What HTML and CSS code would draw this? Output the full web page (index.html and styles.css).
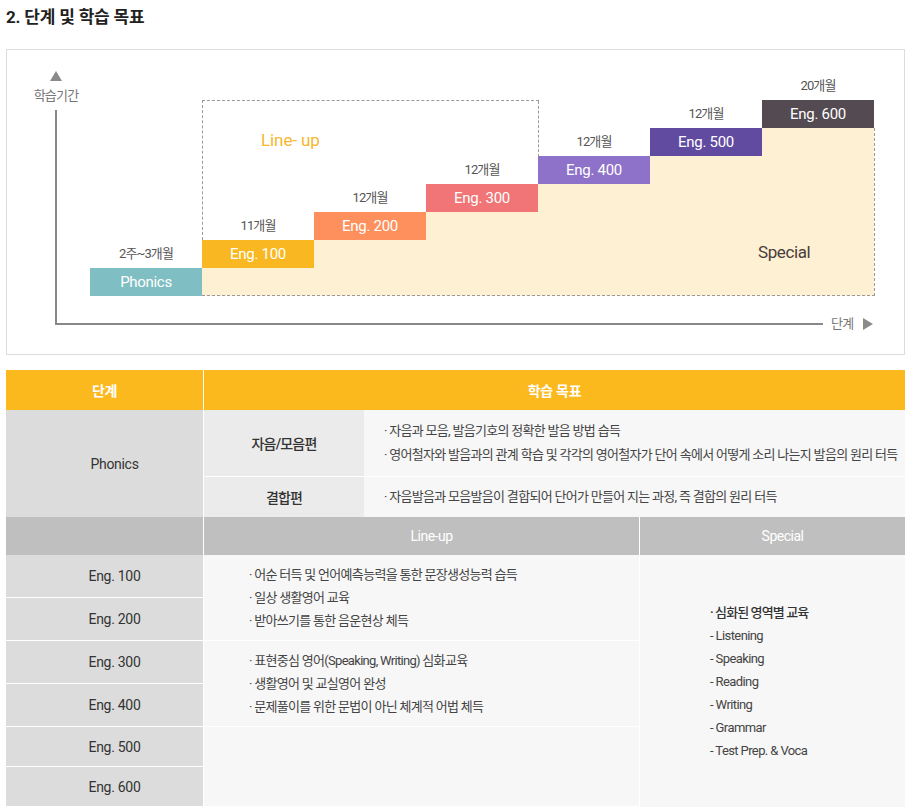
FILE: index.html
```html
<!DOCTYPE html>
<html lang="ko">
<head>
<meta charset="utf-8">
<title>단계 및 학습 목표</title>
<link rel="stylesheet" href="styles.css">
</head>
<body>
<div class="page">
  <h2 class="title">2. 단계 및 학습 목표</h2>

  <div class="chart">
    <div class="y-arrow"></div>
    <div class="y-label">학습기간</div>
    <div class="y-axis"></div>
    <div class="x-axis"></div>
    <div class="x-label">단계</div>
    <div class="x-arrow"></div>

    <div class="steps">
      <div class="step"><div class="dur">2주~3개월</div><div class="bar c-ph">Phonics</div></div>
      <div class="step"><div class="dur">11개월</div><div class="bar c-100">Eng. 100</div><div class="fill f1"></div></div>
      <div class="step"><div class="dur">12개월</div><div class="bar c-200">Eng. 200</div><div class="fill f2"></div></div>
      <div class="step"><div class="dur">12개월</div><div class="bar c-300">Eng. 300</div><div class="fill f3"></div></div>
      <div class="step"><div class="dur">12개월</div><div class="bar c-400">Eng. 400</div><div class="fill f4"></div></div>
      <div class="step"><div class="dur">12개월</div><div class="bar c-500">Eng. 500</div><div class="fill f5"></div></div>
      <div class="step"><div class="dur">20개월</div><div class="bar c-600">Eng. 600</div><div class="fill f6"></div></div>
    </div>

    <div class="lineup-box"></div>
    <div class="special-box"></div>
    <div class="lineup-title">Line- up</div>
    <div class="special-title">Special</div>
  </div>

  <div class="table">
    <div class="cell head h-step">단계</div>
    <div class="cell head h-goal">학습 목표</div>

    <div class="cell stage phon">Phonics</div>
    <div class="cell sub sub1">자음/모음편</div>
    <div class="cell content cont1">
      <p>· 자음과 모음, 발음기호의 정확한 발음 방법 습득</p>
      <p>· 영어철자와 발음과의 관계 학습 및 각각의 영어철자가 단어 속에서 어떻게 소리 나는지 발음의 원리 터득</p>
    </div>
    <div class="cell sub sub2">결합편</div>
    <div class="cell content cont2">
      <p>· 자음발음과 모음발음이 결합되어 단어가 만들어 지는 과정, 즉 결합의 원리 터득</p>
    </div>

    <div class="cell grayhead gh-empty"></div>
    <div class="cell grayhead gh-lineup">Line-up</div>
    <div class="cell grayhead gh-special">Special</div>

    <div class="cell stage eng r5">Eng. 100</div>
    <div class="cell stage eng r6">Eng. 200</div>
    <div class="cell stage eng r7">Eng. 300</div>
    <div class="cell stage eng r8">Eng. 400</div>
    <div class="cell stage eng r9">Eng. 500</div>
    <div class="cell stage eng r10">Eng. 600</div>

    <div class="cell lu lu1">
      <p>· 어순 터득 및 언어예측능력을 통한 문장생성능력 습득</p>
      <p>· 일상 생활영어 교육</p>
      <p>· 받아쓰기를 통한 음운현상 체득</p>
    </div>
    <div class="cell lu lu2">
      <p>· 표현중심 영어(Speaking, Writing) 심화교육</p>
      <p>· 생활영어 및 교실영어 완성</p>
      <p>· 문제풀이를 위한 문법이 아닌 체계적 어법 체득</p>
    </div>
    <div class="cell lu lu3"></div>

    <div class="cell sp">
      <p class="sp-lead">· 심화된 영역별 교육</p>
      <p>- Listening</p>
      <p>- Speaking</p>
      <p>- Reading</p>
      <p>- Writing</p>
      <p>- Grammar</p>
      <p>- Test Prep. &amp; Voca</p>
    </div>
  </div>
</div>
</body>
</html>
```

FILE: styles.css
```css
* { box-sizing: border-box; }

html, body {
  margin: 0;
  padding: 0;
  background: #fff;
}

body {
  font-family: Roboto, "Noto Sans CJK KR", sans-serif;
  color: #333;
}

.page {
  padding: 0 6px;
  width: 911px;
}

p { margin: 0; }

.title {
  margin: 0;
  padding-top: 7px;
  height: 27px;
  line-height: 20px;
  font-size: 17px;
  font-weight: 700;
  letter-spacing: -0.2px;
  color: #222;
}

/* ---------- chart ---------- */
.chart {
  position: relative;
  margin-top: 22px;
  width: 899px;
  height: 306px;
  border: 1px solid #dcdcdc;
  background: #fff;
}

.y-arrow {
  position: absolute;
  left: 43px;
  top: 21px;
  width: 0;
  height: 0;
  border-left: 6px solid transparent;
  border-right: 6px solid transparent;
  border-bottom: 10px solid #8a8a8a;
}

.y-label {
  position: absolute;
  left: 21px;
  top: 37px;
  width: 56px;
  text-align: center;
  font-size: 13px;
  line-height: 18px;
  letter-spacing: -0.8px;
  color: #777;
}

.y-axis {
  position: absolute;
  left: 48px;
  top: 60px;
  width: 2px;
  height: 215px;
  background: #888;
}

.x-axis {
  position: absolute;
  left: 48px;
  top: 273px;
  width: 768px;
  height: 2px;
  background: #888;
}

.x-label {
  position: absolute;
  left: 824px;
  top: 265px;
  font-size: 13px;
  line-height: 18px;
  letter-spacing: -0.8px;
  color: #777;
}

.x-arrow {
  position: absolute;
  left: 856px;
  top: 268px;
  width: 0;
  height: 0;
  border-top: 6px solid transparent;
  border-bottom: 6px solid transparent;
  border-left: 10px solid #8a8a8a;
}

.steps {
  position: absolute;
  left: 83px;
  top: 26px;
  height: 220px;
  display: flex;
  align-items: flex-end;
}

.step {
  width: 112px;
  display: flex;
  flex-direction: column;
}

.dur {
  height: 26px;
  line-height: 24px;
  text-align: center;
  font-size: 13px;
  letter-spacing: -0.9px;
  color: #555;
}

.bar {
  position: relative;
  z-index: 3;
  height: 28px;
  line-height: 28px;
  text-align: center;
  color: #fff;
  font-size: 15px;
  letter-spacing: -0.3px;
}

.c-ph  { background: #7fbec2; }
.c-100 { background: #f9b821; }
.c-200 { background: #fd905d; }
.c-300 { background: #f17576; }
.c-400 { background: #8e71c8; }
.c-500 { background: #614ba0; }
.c-600 { background: #544a51; }

.fill { background: #fef0d3; }
.f1 { height: 28px; }
.f2 { height: 56px; }
.f3 { height: 84px; }
.f4 { height: 112px; }
.f5 { height: 140px; }
.f6 { height: 168px; }

/* Line-up frame: top + left edge down to Eng.100, right edge down to Eng.400 */
.lineup-box {
  position: absolute;
  z-index: 2;
  left: 195px;
  top: 50px;
  width: 337px;
  height: 140px;
  border-top: 1px dashed #9a9a9a;
  border-left: 1px dashed #9a9a9a;
}
.lineup-box::after {
  content: "";
  position: absolute;
  right: 0;
  top: 0;
  height: 56px;
  border-right: 1px dashed #9a9a9a;
}

.special-box {
  position: absolute;
  z-index: 2;
  left: 195px;
  top: 78px;
  width: 673px;
  height: 168px;
  border-right: 1px dashed #9a9a9a;
  border-bottom: 1px dashed #9a9a9a;
}

.lineup-title {
  position: absolute;
  z-index: 4;
  left: 254px;
  top: 79px;
  font-size: 17px;
  line-height: 22px;
  letter-spacing: -0.1px;
  color: #f8b62e;
}

.special-title {
  position: absolute;
  z-index: 4;
  left: 751px;
  top: 191px;
  font-size: 17px;
  line-height: 22px;
  letter-spacing: -0.4px;
  color: #4a3c3c;
}

/* ---------- table ---------- */
.table {
  margin-top: 15px;
  width: 899px;
  display: grid;
  grid-template-columns: 198px 160px 275px 266px;
  grid-template-rows: 40px 66px 41px 38px 43px 43px 43px 43px 40px 40px;
}

.cell {
  display: flex;
  align-items: center;
  justify-content: center;
  text-align: center;
}

.head {
  background: #fbb91e;
  color: #fff;
  font-size: 14px;
  font-weight: 700;
  letter-spacing: -0.3px;
}
.h-step { grid-column: 1; grid-row: 1; border-right: 1px solid #fff; }
.h-goal { grid-column: 2 / 5; grid-row: 1; }

.stage {
  background: #dcdcdc;
  border-right: 1px solid #fff;
  padding-left: 20px;
  font-size: 14px;
  letter-spacing: -0.3px;
  color: #333;
}
.phon { grid-column: 1; grid-row: 2 / 4; }

.sub {
  background: #ebebeb;
  font-size: 14px;
  font-weight: 500;
  letter-spacing: -0.8px;
  color: #333;
}
.sub1 { grid-column: 2; grid-row: 2; }
.sub2 { grid-column: 2; grid-row: 3; border-top: 1px solid #fff; }

.content {
  background: #f7f7f7;
  flex-direction: column;
  align-items: flex-start;
  justify-content: center;
  text-align: left;
  padding-left: 20px;
  font-size: 13px;
  line-height: 24px;
  letter-spacing: -0.7px;
  color: #444;
}
.cont1 { grid-column: 3 / 5; grid-row: 2; }
.cont2 { grid-column: 3 / 5; grid-row: 3; border-top: 1px solid #fff; }

.grayhead {
  background: #bfbfbf;
  color: #fff;
  font-size: 14px;
  letter-spacing: -0.5px;
  padding-left: 20px;
}
.gh-empty { grid-column: 1; grid-row: 4; border-right: 1px solid #fff; }
.gh-lineup { grid-column: 2 / 4; grid-row: 4; }
.gh-special { grid-column: 4; grid-row: 4; border-left: 1px solid #fff; }

.eng { grid-column: 1; border-bottom: 1px solid #fff; }
.r5 { grid-row: 5; }
.r6 { grid-row: 6; }
.r7 { grid-row: 7; }
.r8 { grid-row: 8; }
.r9 { grid-row: 9; }
.r10 { grid-row: 10; }

.lu {
  background: #f7f7f7;
  border-bottom: 1px solid #fff;
  flex-direction: column;
  align-items: flex-start;
  justify-content: center;
  text-align: left;
  padding-left: 45px;
  font-size: 13px;
  line-height: 23px;
  letter-spacing: -0.7px;
  color: #444;
}
.lu1 { grid-column: 2 / 4; grid-row: 5 / 7; }
.lu2 { grid-column: 2 / 4; grid-row: 7 / 9; }
.lu3 { grid-column: 2 / 4; grid-row: 9 / 11; }

.sp {
  grid-column: 4;
  grid-row: 5 / 11;
  background: #f7f7f7;
  border-left: 1px solid #fff;
  flex-direction: column;
  align-items: flex-start;
  justify-content: center;
  text-align: left;
  padding-left: 70px;
  font-size: 13px;
  line-height: 23px;
  letter-spacing: -0.6px;
  color: #444;
}
.sp-lead { font-weight: 500; color: #333; letter-spacing: -0.9px; }
```
